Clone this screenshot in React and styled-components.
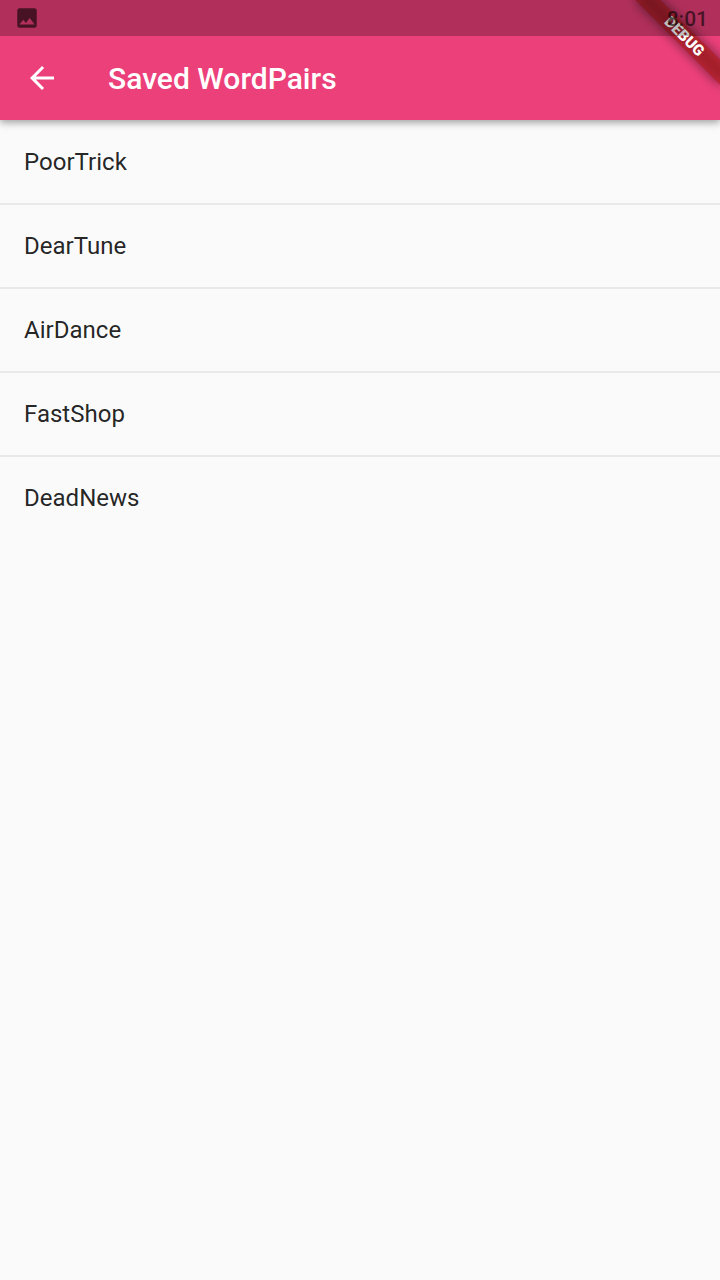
import React from 'react';
import styled, { createGlobalStyle } from 'styled-components';

const GlobalStyle = createGlobalStyle`
  * { box-sizing: border-box; }
  body {
    margin: 0;
    background: #fafafa;
    font-family: Roboto, "Liberation Sans", sans-serif;
  }
`;

const Screen = styled.div`
  position: relative;
  display: flex;
  flex-direction: column;
  width: 720px;
  height: 1280px;
  overflow: hidden;
  background: #fafafa;
`;

const AppBar = styled.header`
  position: relative;
  flex: none;
  display: flex;
  align-items: center;
  height: 120px;
  padding: 36px 24px 0;
  background: #ec407a;
  box-shadow: 0 2px 9px rgba(0, 0, 0, 0.26), 0 3px 6px rgba(0, 0, 0, 0.14);
`;

const BackButton = styled.button`
  display: flex;
  width: 36px;
  height: 36px;
  margin: 0 48px 0 0;
  padding: 0;
  border: 0;
  background: none;
  color: #fff;
`;

const Title = styled.h1`
  margin: 0;
  padding-top: 2px;
  font-size: 30px;
  line-height: 36px;
  font-weight: 500;
  letter-spacing: 0.02px;
  color: #fff;
`;

const WordList = styled.ul`
  margin: 0;
  padding: 0;
  list-style: none;
`;

const WordRow = styled.li`
  display: flex;
  align-items: center;
  height: 84px;
  padding: 0 24px;
  font-size: 24px;
  line-height: 28px;
  letter-spacing: 0.02px;
  color: rgba(0, 0, 0, 0.87);
  box-shadow: ${({ $divided }) => ($divided ? '0 1px #e9e9e9, inset 0 -1px #e9e9e9' : 'none')};
`;

const BannerCorner = styled.div`
  position: absolute;
  top: 0;
  right: 0;
  width: 0;
  height: 0;
  transform: rotate(45deg);
`;

const Banner = styled.div`
  position: absolute;
  left: -60px;
  top: 42px;
  width: 120px;
  height: 18px;
  background: rgba(183, 28, 28, 0.63);
`;

const BannerShade = styled(Banner)`
  background: rgba(0, 0, 0, 0.5);
  filter: blur(5.9px);
`;

const BannerText = styled(Banner)`
  padding-left: 1px;
  text-align: center;
  font-size: 15.3px;
  line-height: 18px;
  font-weight: 900;
  color: #fff;
`;

const StatusBar = styled.div`
  position: absolute;
  top: 0;
  left: 0;
  display: flex;
  align-items: center;
  justify-content: space-between;
  width: 100%;
  height: 36px;
  padding: 0 12px 0 14px;
  background: rgba(0, 0, 0, 0.25);
  color: rgba(0, 0, 0, 0.6);
`;

const Clock = styled.span`
  padding-top: 2px;
  font-size: 21px;
  line-height: 24px;
  font-weight: 500;
`;

const Glyph = styled.svg`
  display: block;
  width: ${({ $size }) => $size}px;
  height: ${({ $size }) => $size}px;
  fill: currentColor;
`;

const words = ['PoorTrick', 'DearTune', 'AirDance', 'FastShop', 'DeadNews'];

export default function App() {
  return (
    <Screen>
      <GlobalStyle />
      <AppBar>
        <BackButton aria-label="Back">
          <Glyph $size={36} viewBox="0 0 24 24">
            <path d="M20 11H7.83l5.59-5.59L12 4l-8 8 8 8 1.41-1.41L7.83 13H20v-2z" />
          </Glyph>
        </BackButton>
        <Title>Saved WordPairs</Title>
      </AppBar>
      <WordList>
        {words.map((word, i) => (
          <WordRow key={word} $divided={i < words.length - 1}>{word}</WordRow>
        ))}
      </WordList>
      <BannerCorner>
        <BannerShade />
        <BannerText>DEBUG</BannerText>
      </BannerCorner>
      <StatusBar>
        <Glyph $size={26} viewBox="0 0 24 24">
          <path d="M21 19V5c0-1.100-.9-2-2-2H5c-1.100 0-2 .9-2 2v14c0 1.100.9 2 2 2h14c1.100 0 2-.9 2-2zM8.500 13.500l2.500 3.010L14.500 12l4.500 6H5l3.500-4.500z" />
        </Glyph>
        <Clock>8:01</Clock>
      </StatusBar>
    </Screen>
  );
}
